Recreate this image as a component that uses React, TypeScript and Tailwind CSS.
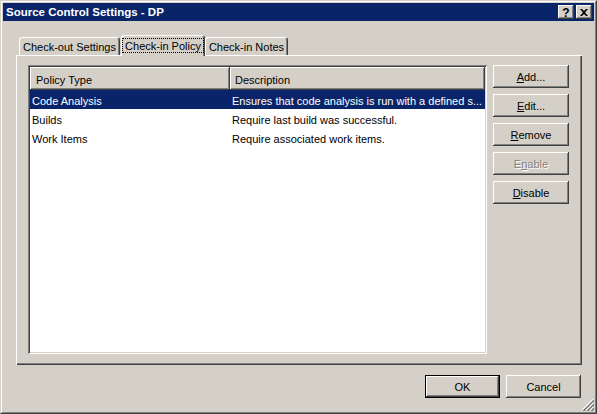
import React from 'react';

const raised =
  'shadow-[inset_-1px_-1px_#404040,inset_1px_1px_#fff,inset_-2px_-2px_#808080,inset_2px_2px_#d4d0c8]';

const Btn: React.FC<{ label: React.ReactNode; disabled?: boolean; isDefault?: boolean; w?: string }> = ({
  label,
  disabled,
  isDefault,
  w = 'w-[76px]',
}) => (
  <button
    className={`${w} h-[23px] bg-[#d4d0c8] flex items-center justify-center pt-[2px] ${
      isDefault
        ? 'shadow-[inset_0_0_0_1px_#000,inset_-2px_-2px_#404040,inset_2px_2px_#fff,inset_-3px_-3px_#808080]'
        : raised
    } ${disabled ? 'text-[#808080] [text-shadow:1px_1px_#fff]' : 'text-black'}`}
  >
    {label}
  </button>
);

const rows = [
  { type: 'Code Analysis', desc: 'Ensures that code analysis is run with a defined s...', selected: true },
  { type: 'Builds', desc: 'Require last build was successful.' },
  { type: 'Work Items', desc: 'Require associated work items.' },
];

export default function App() {
  return (
    <div className="w-[597px] h-[414px] bg-[#d4d0c8] font-['Liberation_Sans',Arial,sans-serif] text-[11px] leading-none text-black select-none">
      {/* window frame */}
      <div className="relative h-full border border-t-[#d4d0c8] border-l-[#d4d0c8] border-b-[#404040] border-r-[#404040]">
        <div className="h-full border border-t-white border-l-white border-b-[#808080] border-r-[#808080] p-px flex flex-col">
          {/* title bar */}
          <div className="h-[18px] bg-[#0a246a] flex items-center pl-[3px] pr-[2px]">
            <span className="flex-1 text-white font-bold text-[11.5px] pt-px">Source Control Settings - DP</span>
            <div className="flex gap-[2px]">
              <div className={`w-[16px] h-[14px] bg-[#d4d0c8] ${raised} flex items-center justify-center font-bold text-[12px] pt-px`}>
                ?
              </div>
              <div className={`w-[16px] h-[14px] bg-[#d4d0c8] ${raised} flex items-center justify-center`}>
                <svg width="8" height="7" viewBox="0 0 8 7">
                  <path d="M0 0h2l2 2 2-2h2L5 3.5 8 7H6L4 5 2 7H0l3-3.5z" fill="#000" />
                </svg>
              </div>
            </div>
          </div>

          {/* body */}
          <div className="flex-1 pl-[13px] pr-[12px] pt-[14px]">
            {/* tabs */}
            <div className="h-[20px] flex items-end pl-[3px]">
              <div className="w-[101px] h-[18px] rounded-t-[3px] flex items-center justify-center pt-[2px] shadow-[inset_1px_1px_#fff,inset_-1px_0_#404040,inset_-2px_0_#808080]">
                Check-out Settings
              </div>
              <div className="relative z-10 ml-px w-[84px] h-[21px] -mb-px rounded-t-[3px] bg-[#d4d0c8] flex items-start justify-center pt-[3px] shadow-[inset_1px_1px_#fff,inset_-1px_0_#404040,inset_-2px_0_#808080]">
                <span className="border border-dotted border-black px-[2px] h-[15px] flex items-center pt-px">Check-in Policy</span>
              </div>
              <div className="w-[83px] h-[18px] rounded-t-[3px] flex items-center justify-center pt-[2px] shadow-[inset_1px_1px_#fff,inset_-1px_0_#404040,inset_-2px_0_#808080]">
                Check-in Notes
              </div>
            </div>

            {/* panel */}
            <div className="h-[310px] pl-[12px] pt-[10px] shadow-[inset_1px_1px_#fff,inset_-1px_-1px_#404040,inset_-2px_-2px_#808080]">
              <div className="flex gap-[6px]">
                {/* list view */}
                <div className="w-[459px] h-[289px] bg-white p-[2px] shadow-[inset_1px_1px_#808080,inset_-1px_-1px_#fff,inset_2px_2px_#404040,inset_-2px_-2px_#d4d0c8]">
                  <div className="flex h-[23px] bg-[#d4d0c8]">
                    <div className={`w-[200px] flex items-center pl-[6px] pt-[3px] ${raised}`}>Policy Type</div>
                    <div className={`flex-1 flex items-center pl-[5px] pt-[3px] ${raised}`}>Description</div>
                  </div>
                  {rows.map((r) => (
                    <div
                      key={r.type}
                      className={`flex h-[19px] items-center pt-[3px] ${r.selected ? 'bg-[#0a246a] text-white' : ''}`}
                    >
                      <div className="w-[200px] pl-[2px] truncate">{r.type}</div>
                      <div className="flex-1 pl-[2px] truncate">{r.desc}</div>
                    </div>
                  ))}
                </div>

                {/* side buttons */}
                <div className="flex flex-col gap-[6px]">
                  <Btn label={<span><u>A</u>dd...</span>} />
                  <Btn label={<span><u>E</u>dit...</span>} />
                  <Btn label={<span><u>R</u>emove</span>} />
                  <Btn label={<span>E<u>n</u>able</span>} disabled />
                  <Btn label={<span><u>D</u>isable</span>} />
                </div>
              </div>
            </div>

            {/* dialog buttons */}
            <div className="flex justify-end gap-[6px] mt-[10px] pr-px">
              <Btn label="OK" isDefault w="w-[75px]" />
              <Btn label="Cancel" w="w-[75px]" />
            </div>
          </div>
        </div>

        {/* size grip */}
        <svg className="absolute right-[2px] bottom-[2px]" width="12" height="12" viewBox="0 0 12 12">
          <path d="M11 0L0 11M11 4L4 11M11 8L8 11" stroke="#fff" strokeWidth="1" />
          <path d="M12 1L1 12M12 2L2 12M12 5L5 12M12 6L6 12M12 9L9 12M12 10L10 12" stroke="#808080" strokeWidth="1" />
        </svg>
      </div>
    </div>
  );
}
